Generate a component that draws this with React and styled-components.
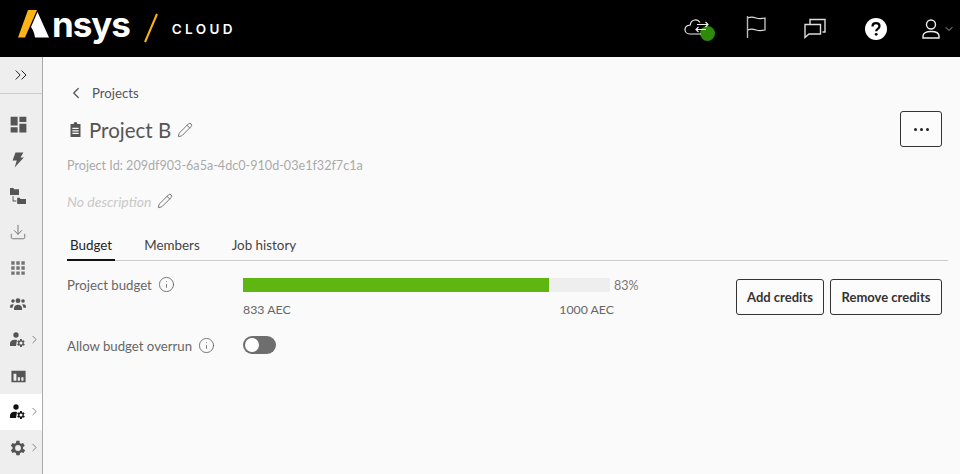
import React from 'react'
import styled, { createGlobalStyle } from 'styled-components'
import { ChevronLeft, ChevronRight, ChevronDown, ChevronsRight, Pencil, Info, Download } from 'lucide-react'

const GlobalStyle = createGlobalStyle`
    html, body { margin: 0; padding: 0; height: 100%; }
    body {
        font-family: 'Lato', 'Liberation Sans', sans-serif;
        background: #fafafa;
        color: #555;
    }
    * { box-sizing: border-box; }
`

const Page = styled.div`
    width: 960px;
    height: 474px;
    display: flex;
    flex-direction: column;
    overflow: hidden;
`

const TopBar = styled.header`
    height: 57px;
    flex: none;
    background: #000;
    display: flex;
    align-items: center;
    justify-content: space-between;
    padding: 0 5px 0 18px;
`

const Brand = styled.div`
    display: flex;
    align-items: center;
`

const LogoMark = styled.svg`
    flex: none;
    margin-top: -10px;
`

const LogoType = styled.span`
    font-family: 'Inter', 'Liberation Sans', sans-serif;
    font-weight: 700;
    font-size: 35px;
    line-height: 40px;
    letter-spacing: -1.1px;
    color: #fff;
    margin-top: -9px;
`

const Slash = styled.svg`
    margin: -2px 0 0 14px;
    flex: none;
`

const CloudText = styled.span`
    font-family: 'Inter', 'Liberation Sans', sans-serif;
    font-weight: 600;
    font-size: 13.5px;
    letter-spacing: 3.4px;
    color: #fff;
    margin-left: 14px;
`

const TopIcons = styled.div`
    display: flex;
    align-items: center;
    color: #ddd;
`

const TopIcon = styled.div`
    position: relative;
    width: ${p => p.$w}px;
    margin-left: ${p => p.$ml || 0}px;
    margin-top: ${p => p.$mt || 0}px;
    display: flex;
    align-items: center;
`

const StatusDot = styled.span`
    position: absolute;
    left: 16px;
    top: 7px;
    width: 15px;
    height: 15px;
    border-radius: 50%;
    background: #2f8a0c;
`

const Body = styled.div`
    flex: 1;
    display: flex;
    min-height: 0;
`

const Sidebar = styled.nav`
    width: 43px;
    flex: none;
    background: #eeeeee;
    border-right: 1px solid #aaa;
    display: flex;
    flex-direction: column;
`

const Toggle = styled.div`
    height: 37px;
    flex: none;
    border-bottom: 1px solid #ccc;
    display: flex;
    align-items: center;
    padding-left: 11px;
    color: #222;
    margin-bottom: 12px;
`

const NavItem = styled.div`
    height: 36px;
    flex: none;
    position: relative;
    display: flex;
    align-items: center;
    padding-left: 6px;
    color: ${p => (p.$active ? '#111' : '#555')};
    background: ${p => (p.$active ? '#fff' : 'transparent')};
`

const NavIconBox = styled.span`
    width: 24px;
    display: flex;
    align-items: center;
    justify-content: center;
`

const NavArrow = styled.span`
    position: absolute;
    left: 28px;
    top: 11px;
    display: flex;
    color: #555;
`

const Main = styled.main`
    flex: 1;
    padding: 28px 12px 0 24px;
    background: #fafafa;
`

const BackLink = styled.div`
    display: flex;
    align-items: center;
    height: 18px;
    font-size: 13.2px;
    color: #555;
    gap: 7px;
    margin: -1px 0 1px 0;
`

const TitleRow = styled.div`
    display: flex;
    align-items: center;
    justify-content: space-between;
    margin-top: 9px;
    padding-right: 6px;
    height: 36px;
`

const Title = styled.div`
    display: flex;
    align-items: center;
    color: #555;
    margin: 1px 0 0 1px;
`

const TitleText = styled.h1`
    margin: 0 0 0 6px;
    font-weight: 400;
    font-size: 20.5px;
    line-height: 28px;
`

const EditIcon = styled(Pencil)`
    margin-left: ${p => p.$ml}px;
    color: #555;
`

const Button = styled.button`
    height: 36px;
    width: ${p => p.$w}px;
    border: 1px solid #333;
    border-radius: 3px;
    background: #fcfcfc;
    font-family: inherit;
    font-weight: 700;
    font-size: 13px;
    color: #333;
    padding: 0;
    display: flex;
    align-items: center;
    justify-content: center;
    gap: 3px;
`

const Dot = styled.i`
    width: 3px;
    height: 3px;
    border-radius: 50%;
    background: #222;
`

const ProjectId = styled.div`
    margin-top: 10px;
    font-size: 12.6px;
    line-height: 18px;
    color: #aaa;
`

const Description = styled.div`
    margin-top: 16px;
    display: flex;
    align-items: center;
    height: 20px;
    font-size: 14px;
    font-style: italic;
    color: #c8c8c8;
`

const Tabs = styled.div`
    margin-top: 25px;
    height: 25px;
    display: flex;
    border-bottom: 1px solid #ccc;
    font-size: 13.4px;
`

const Tab = styled.div`
    padding: 0 3px;
    margin-right: ${p => p.$mr || 0}px;
    height: 25px;
    line-height: 19px;
    color: ${p => (p.$active ? '#222' : '#444')};
    border-bottom: ${p => (p.$active ? '2px solid #111' : '0')};
`

const BudgetRow = styled.div`
    display: flex;
    margin-top: 18px;
    padding-right: 6px;
    height: 36px;
`

const Label = styled.div`
    width: 176px;
    flex: none;
    display: flex;
    align-items: center;
    align-self: flex-start;
    gap: 6px;
    height: 13px;
    margin-top: -1px;
    font-size: 13.2px;
    color: #666;
    svg { color: #555; }
`

const BudgetMeter = styled.div`
    width: 397px;
    flex: none;
    margin-top: -1px;
`

const MeterTop = styled.div`
    display: flex;
    align-items: center;
    gap: 4px;
    height: 14px;
    font-size: 12.5px;
    color: #777;
`

const Track = styled.div`
    width: 367px;
    height: 14px;
    flex: none;
    background: #eeeeee;
`

const Fill = styled.div`
    height: 100%;
    background: #5fb611;
`

const MeterScale = styled.div`
    display: flex;
    justify-content: space-between;
    width: 371px;
    margin-top: 10px;
    font-size: 12.3px;
    line-height: 16px;
    color: #666;
`

const Actions = styled.div`
    margin-left: auto;
    display: flex;
    gap: 6px;
`

const OverrunRow = styled.div`
    display: flex;
    align-items: center;
    margin-top: 20px;
    height: 20px;
`

const OverrunLabel = styled(Label)`
    align-self: center;
    height: 20px;
    margin-top: 0;
    padding-top: 1px;
`

const Switch = styled.div`
    width: 33px;
    height: 18px;
    border-radius: 9px;
    background: #6e6e6e;
    padding: 2px;
`

const Knob = styled.div`
    width: 14px;
    height: 14px;
    border-radius: 50%;
    background: #fff;
`

const Svg = ({ children, size = 24, ...rest }) => (
    <svg width={size} height={size} viewBox="0 0 24 24" fill="currentColor" {...rest}>{children}</svg>
)

const cogPath = 'M19.4 13a7.5 7.5 0 0 0 0-2l2.1-1.6-2-3.5-2.5 1a7.5 7.5 0 0 0-1.7-1L15.4 3.2h-4l-.4 2.7a7.5 7.5 0 0 0-1.7 1l-2.5-1-2 3.5L6.9 11a7.5 7.5 0 0 0 0 2l-2.1 1.6 2 3.5 2.5-1a7.5 7.5 0 0 0 1.7 1l.4 2.7h4l.4-2.7a7.5 7.5 0 0 0 1.7-1l2.5 1 2-3.5zM13.4 15.5a3.5 3.5 0 1 1 0-7 3.5 3.5 0 0 1 0 7z'

const UserCog = () => (
    <Svg size={16} style={{ overflow: 'visible' }}>
        <circle cx="9" cy="4.5" r="4" />
        <path d="M0 21v-4c0-3 3-5.500 7-5.500 1.500 0 2.500.2 3.500.6L9 21z" />
        <g transform="translate(7.5 8.5) scale(.67)"><path fillRule="evenodd" d={cogPath} /></g>
    </Svg>
)

const navIcons = [
    { key: 'dash', icon: <Svg size={21}><path d="M3 3h8v10H3zM13 3h8v6h-8zM13 11h8v10h-8zM3 15h8v6H3z" /></Svg> },
    { key: 'bolt', icon: <Svg size={20}><path d="M9 3h9.500l-3.500 6h4L8 21l2.500-8.500H5.500z" /></Svg> },
    { key: 'tree', icon: <Svg size={20}><path d="M2.400 2.400h4l1 1.400h5.800v7H2.400zM11 14.200h3l1 1.400h6.600v6H11z" /><path d="M5.500 12h1.100v5.500H10v1.100H5.500z" /></Svg> },
    { key: 'download', icon: <Download size={18} strokeWidth={1.3} color="#777" /> },
    { key: 'apps', icon: <Svg size={18}><path d="M3 3h4.500v4.500H3zM9.750 3h4.500v4.500h-4.500zM16.500 3H21v4.500h-4.500zM3 9.750h4.500v4.500H3zM9.750 9.750h4.500v4.500h-4.500zM16.500 9.750H21v4.500h-4.500zM3 16.500h4.500V21H3zM9.750 16.500h4.500V21h-4.500zM16.500 16.500H21V21h-4.500z" opacity=".8" /></Svg> },
    { key: 'team', icon: <Svg size={16}><circle cx="12" cy="7" r="3.600" /><circle cx="4.500" cy="7.500" r="2.700" /><circle cx="19.500" cy="7.500" r="2.700" /><path d="M6 21v-3c0-3 2.500-5 6-5s6 2 6 5v3zM0 17.500V16c0-2.200 1.900-3.500 4.500-3.500l1.300.2C4.600 13.900 4 15.400 4 17.500zM24 17.500V16c0-2.200-1.900-3.500-4.500-3.500l-1.300.2c1.200 1.200 1.800 2.700 1.800 4.800z" /></Svg> },
    { key: 'admin', icon: <UserCog />, arrow: true },
    { key: 'chart', icon: <Svg size={17}><path fillRule="evenodd" d="M2 4h20v16H2zM5 8v10h4V8zM11 13v5h3v-5zM16 13v5h3v-5z" /></Svg> },
    { key: 'project', icon: <UserCog />, arrow: true, active: true },
    { key: 'settings', icon: <Svg size={20}><path fillRule="evenodd" transform="translate(-1.400 0)" d={cogPath} /></Svg>, arrow: true },
]

function Logo() {
    return (
        <Brand>
            <LogoMark width="34" height="28" viewBox="0 0 34 28">
                <path d="M0 27.500 10 0h9L7 27.500z" fill="#fbb316" />
                <path d="M19.500 2 31 27.500H17C16.500 23 15 20 13 17z" fill="#fff" />
            </LogoMark>
            <LogoType>nsys</LogoType>
            <Slash width="14" height="30" viewBox="0 0 14 30">
                <path d="M1 29 13 1" stroke="#fbb316" strokeWidth="2" fill="none" />
            </Slash>
            <CloudText>CLOUD</CloudText>
        </Brand>
    )
}

function TopActions() {
    return (
        <TopIcons>
            <TopIcon $w={32}>
                <StatusDot />
                <svg width="26" height="20" viewBox="0 0 26 20" fill="none" stroke="#eee" strokeWidth="1.200" style={{ position: 'relative' }}>
                    <path d="M16 3.500C14.500 1 12.500.5 10.500 1 8 1.500 6.500 3.500 6.300 6 3 6.300 1 8 1 10.500 1 13 3 15 5.500 15H17" />
                    <path d="M13 5.500h11M21.500 3 24 5.500 21.500 8M22 10.500H12M14.500 8 12 10.500 14.500 13" />
                </svg>
            </TopIcon>
            <TopIcon $w={22} $ml={30} $mt={-2}>
                <svg width="22" height="24" viewBox="0 0 22 24" fill="none" stroke="#bbb" strokeWidth="1.400">
                    <path d="M1.500 0v22" />
                    <path d="M2 2c3-1.500 5-1 8 0s5 1 9 0v12c-4 1-6 1-9 0s-5-1.500-8 0" stroke="#ddd" strokeWidth="1.200" />
                </svg>
            </TopIcon>
            <TopIcon $w={24} $ml={35}>
                <svg width="24" height="22" viewBox="0 0 24 22" fill="none" stroke="#ddd" strokeWidth="1.400">
                    <path d="M7 6V1.500h15V14h-2.500" />
                    <path d="M2 6.500h15.500V16H6l-4 3.500z" />
                </svg>
            </TopIcon>
            <TopIcon $w={22} $ml={38}>
                <svg width="22" height="22" viewBox="0 0 22 22">
                    <circle cx="11" cy="11" r="11" fill="#fff" />
                    <path d="M7.500 8.500C7.500 6.500 9 5.200 11 5.200s3.500 1.200 3.500 3c0 2.600-3.300 2.600-3.300 5" fill="none" stroke="#000" strokeWidth="2.200" />
                    <circle cx="11.200" cy="16.300" r="1.400" fill="#000" />
                </svg>
            </TopIcon>
            <TopIcon $w={33} $ml={35}>
                <svg width="18" height="20" viewBox="0 0 18 20" fill="none" stroke="#eee" strokeWidth="1.400" style={{ flex: 'none' }}>
                    <circle cx="9" cy="5.500" r="4.500" />
                    <path d="M1 19v-2c0-3 3.500-4.500 8-4.500s8 1.500 8 4.500v2z" />
                </svg>
                <ChevronDown size={12} strokeWidth={1.600} color="#ccc" style={{ marginLeft: 3, flex: 'none' }} />
            </TopIcon>
        </TopIcons>
    )
}

export default function App() {
    const used = 833
    const total = 1000
    return (
        <Page>
            <GlobalStyle />
            <TopBar>
                <Logo />
                <TopActions />
            </TopBar>
            <Body>
                <Sidebar>
                    <Toggle><ChevronsRight size={20} strokeWidth={1.200} /></Toggle>
                    {navIcons.map(item => (
                        <NavItem key={item.key} $active={item.active}>
                            <NavIconBox>{item.icon}</NavIconBox>
                            {item.arrow && <NavArrow><ChevronRight size={13} strokeWidth={1.300} /></NavArrow>}
                        </NavItem>
                    ))}
                </Sidebar>
                <Main>
                    <BackLink><ChevronLeft size={18} strokeWidth={1.700} />Projects</BackLink>
                    <TitleRow>
                        <Title>
                            <Svg size={15}><path fillRule="evenodd" d="M9 3a3 3 0 0 1 6 0h5v21H4V3zM7 9v2h10V9zM7 13v2h10v-2zM7 17v2h10v-2z" /></Svg>
                            <TitleText>Project B</TitleText>
                            <EditIcon size={16} strokeWidth={1.200} $ml={6} />
                        </Title>
                        <Button $w={42}><Dot /><Dot /><Dot /></Button>
                    </TitleRow>
                    <ProjectId>Project Id: 209df903-6a5a-4dc0-910d-03e1f32f7c1a</ProjectId>
                    <Description>No description<EditIcon size={16} strokeWidth={1.200} $ml={6} /></Description>
                    <Tabs>
                        <Tab $active $mr={26}>Budget</Tab>
                        <Tab $mr={26}>Members</Tab>
                        <Tab>Job history</Tab>
                    </Tabs>
                    <BudgetRow>
                        <Label>Project budget <Info size={17} strokeWidth={1.100} /></Label>
                        <BudgetMeter>
                            <MeterTop>
                                <Track><Fill style={{ width: `${(used / total) * 100}%` }} /></Track>
                                83%
                            </MeterTop>
                            <MeterScale><span>{used} AEC</span><span>{total} AEC</span></MeterScale>
                        </BudgetMeter>
                        <Actions>
                            <Button $w={88}>Add credits</Button>
                            <Button $w={112}>Remove credits</Button>
                        </Actions>
                    </BudgetRow>
                    <OverrunRow>
                        <OverrunLabel>Allow budget overrun <Info size={17} strokeWidth={1.100} /></OverrunLabel>
                        <Switch><Knob /></Switch>
                    </OverrunRow>
                </Main>
            </Body>
        </Page>
    )
}
